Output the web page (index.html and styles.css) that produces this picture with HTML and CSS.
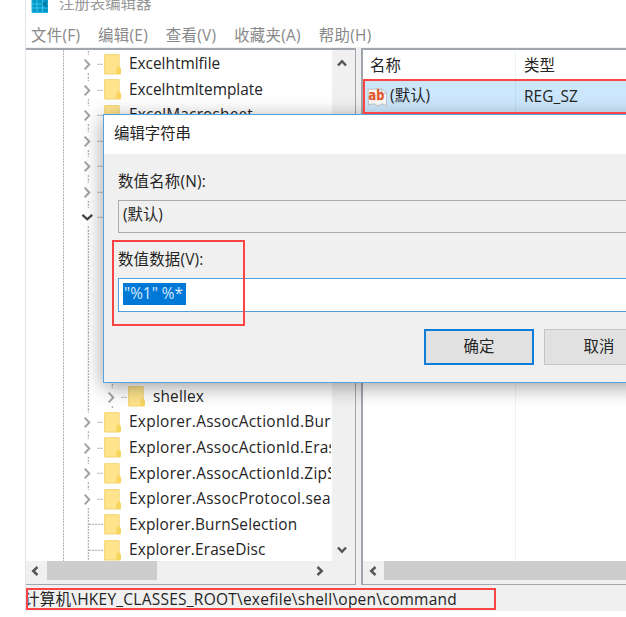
FILE: index.html
```html
<!DOCTYPE html>
<html lang="zh-CN">
<head>
<meta charset="utf-8">
<title>注册表编辑器</title>
<link rel="stylesheet" href="styles.css">
</head>
<body>
<svg class="defs" width="0" height="0">
  <symbol id="closed" viewBox="0 0 28 25.58">
    <path class="dots" d="M12.4 0v4M12.4 22v4M21.5 13.3h5"/>
    <path class="chev" d="M8.7 8.6l4.6 4.9-4.6 4.9"/>
  </symbol>
  <symbol id="open" viewBox="0 0 28 25.58">
    <path class="dots" d="M12.4 0v4M12.4 22v4M21.5 13.3h5"/>
    <path class="chev dark" d="M6.4 10.8l4.9 4.5 4.9-4.5"/>
  </symbol>
  <symbol id="leaf" viewBox="0 0 28 25.58">
    <path class="dots" d="M12.4 0v25.58M13 13.3h14"/>
  </symbol>
  <symbol id="line" viewBox="0 0 28 25.58">
    <path class="dots" d="M12.4 0v25.58"/>
  </symbol>
  <symbol id="folder" viewBox="0 0 17 22">
    <path d="M.7 1.7h14.4v12l1.3 1.5v5.8H.7z" fill="#ffe48d" stroke="#f2d46c" stroke-width="1"/>
    <path d="M12.3 21v-4.6l1.5-3h1.5l1.2 2V21z" fill="#f7d55c"/>
  </symbol>
</svg>
<main class="window">
  <header class="title">
    <svg class="app" width="19" height="15" viewBox="0 0 19 15"><path d="M1 0h16v12.5H1z" fill="#0797c9"/><path d="M1 4h16M1 8h16M6 0v12M11.5 0v12" stroke="#35c4ed"/><path d="M8 0l3 4 5-3v7l-4-3z" fill="#087aa8"/><path d="M1 0v12.5h16" fill="none" stroke="#21b7e5"/></svg>
    <span>注册表编辑器</span>
  </header>
  <nav class="menu"><span>文件(F)</span><span>编辑(E)</span><span>查看(V)</span><span>收藏夹(A)</span><span>帮助(H)</span></nav>
  <div class="panes">
    <section class="pane left">
      <div class="upper">
        <div class="tree">
          <div class="row"><svg class="ex"><use href="#closed"/></svg><svg class="fo"><use href="#folder"/></svg><span>Excelhtmlfile</span></div>
          <div class="row"><svg class="ex"><use href="#closed"/></svg><svg class="fo"><use href="#folder"/></svg><span>Excelhtmltemplate</span></div>
          <div class="row"><svg class="ex"><use href="#closed"/></svg><svg class="fo"><use href="#folder"/></svg><span>ExcelMacrosheet</span></div>
          <div class="row"><svg class="ex"><use href="#closed"/></svg></div>
          <div class="row"><svg class="ex"><use href="#closed"/></svg></div>
          <div class="row"><svg class="ex"><use href="#closed"/></svg></div>
          <div class="row"><svg class="ex"><use href="#open"/></svg></div>
          <div class="row"><svg class="ex"><use href="#line"/></svg></div>
          <div class="row"><svg class="ex"><use href="#line"/></svg></div>
          <div class="row"><svg class="ex"><use href="#line"/></svg></div>
          <div class="row"><svg class="ex"><use href="#line"/></svg></div>
          <div class="row"><svg class="ex"><use href="#line"/></svg></div>
          <div class="row"><svg class="ex"><use href="#line"/></svg></div>
          <div class="row child"><svg class="ex"><use href="#line"/></svg><svg class="ex"><use href="#closed"/></svg><svg class="fo"><use href="#folder"/></svg><span>shellex</span></div>
          <div class="row"><svg class="ex"><use href="#closed"/></svg><svg class="fo"><use href="#folder"/></svg><span>Explorer.AssocActionId.Bur</span></div>
          <div class="row"><svg class="ex"><use href="#closed"/></svg><svg class="fo"><use href="#folder"/></svg><span>Explorer.AssocActionId.Eras</span></div>
          <div class="row"><svg class="ex"><use href="#closed"/></svg><svg class="fo"><use href="#folder"/></svg><span>Explorer.AssocActionId.ZipS</span></div>
          <div class="row"><svg class="ex"><use href="#closed"/></svg><svg class="fo"><use href="#folder"/></svg><span>Explorer.AssocProtocol.sea</span></div>
          <div class="row"><svg class="ex"><use href="#leaf"/></svg><svg class="fo"><use href="#folder"/></svg><span>Explorer.BurnSelection</span></div>
          <div class="row"><svg class="ex"><use href="#leaf"/></svg><svg class="fo"><use href="#folder"/></svg><span>Explorer.EraseDisc</span></div>
        </div>
        <div class="vbar">
          <svg width="12" height="10" viewBox="0 0 12 10"><path class="arrow" d="M2 7.5l4-4.3 4 4.3"/></svg>
          <svg width="12" height="10" viewBox="0 0 12 10"><path class="arrow" d="M2 2.5l4 4.3 4-4.3"/></svg>
        </div>
      </div>
      <div class="hbar">
        <svg width="10" height="12" viewBox="0 0 10 12"><path class="arrow" d="M7.5 2L3.2 6l4.3 4"/></svg>
        <div class="thumb"></div>
        <svg class="end" width="10" height="12" viewBox="0 0 10 12"><path class="arrow" d="M2.5 2l4.3 4-4.3 4"/></svg>
      </div>
    </section>
    <section class="pane right">
      <div class="list">
        <div class="cols head"><span>名称</span><span>类型</span></div>
        <div class="cols value">
          <span><svg width="21" height="21" viewBox="0 0 20 20"><path d="M1 2h13l4.5 3v13l-4-2-4 2-4-2-5 1z" fill="#fafafa" stroke="#c4c7ca"/><path d="M14 2v4h4.5" fill="none" stroke="#b4b7ba"/><text x="1.5" y="12.3" textLength="15" lengthAdjust="spacingAndGlyphs">ab</text></svg><i>(默认)</i></span>
          <span class="type">REG_SZ</span>
        </div>
        <div class="cols rest"><span></span><span></span></div>
      </div>
      <div class="hbar">
        <svg width="10" height="12" viewBox="0 0 10 12"><path class="arrow" d="M7.5 2L3.2 6l4.3 4"/></svg>
        <div class="thumb"></div>
      </div>
    </section>
  </div>
  <footer class="status"><span><b>计算机</b>\HKEY_CLASSES_ROOT\exefile\shell\open\command</span></footer>
</main>
<section class="dialog">
  <h1>编辑字符串</h1>
  <div class="form">
    <label>数值名称(N):</label>
    <div class="field readonly"><span>(默认)</span></div>
    <label>数值数据(V):</label>
    <div class="field"><mark>"%1" %*</mark></div>
    <div class="buttons"><button class="ok">确定</button><button>取消</button></div>
  </div>
</section>
<div class="note note-value"></div>
<div class="note note-data"></div>
<div class="note note-path"></div>
</body>
</html>
```

FILE: styles.css
```css
* { box-sizing: border-box; }
body {
  margin: 0; width: 626px; height: 617px; overflow: hidden; background: #fff; position: relative;
  font: 15.4px/20px "Open Sans", "Noto Sans CJK SC", sans-serif; color: #242424; white-space: nowrap;
}
svg { display: block; flex: none; }
.defs { position: absolute; }
.dots { fill: none; stroke: #b4b4b4; stroke-width: 1.3; stroke-dasharray: 2 1; }
.chev { fill: none; stroke: #a2a2a2; stroke-width: 2; }
.chev.dark { stroke: #444; stroke-width: 2.3; }
.arrow { fill: none; stroke: #555; stroke-width: 2.4; }

.window { margin-left: 25px; height: 611px; border-left: 1px solid #e4e4e4; display: flex; flex-direction: column; }
.title { height: 22px; display: flex; padding-left: 5px; color: #999; flex: none; }
.title span { margin: -6px 0 0 9px; }
.menu { height: 26px; flex: none; display: flex; padding: 4px 0 0 5px; gap: 17.8px; color: #888; font-size: 15.4px; letter-spacing: .3px; border-bottom: 1px solid #f2f2f2; }
.panes { height: 537px; flex: none; display: flex; gap: 5px; background: #f0f0f0; }
.pane { border: solid #a1a5ad; border-width: 2px 1px 1px; display: flex; flex-direction: column; height: 537px; background: #fff; }
.left { width: 330px; border-left: 0; }
.right { flex: 1; border-left-width: 2px; border-right: 0; }
.upper { height: 511px; display: flex; overflow: hidden; }
.tree { width: 305px; overflow: hidden; padding: 1px 0 0 50px; background: repeating-linear-gradient(#b9b9b9 0 2px, #eee 2px 3px) 37px 0 / 1px 100% no-repeat; }
.row { height: 25.58px; display: flex; align-items: center; letter-spacing: .17px; }
.row:nth-child(n+15):nth-child(-n+18) { letter-spacing: .3px; }
.row:first-child { letter-spacing: 0; }
.row:nth-child(2) { letter-spacing: 0; }
.ex { width: 28px; height: 25.58px; }
.fo { width: 17px; height: 22px; }
.row span { margin: 1px 0 0 8px; }
.child .ex:first-child { margin-right: -4px; }
.vbar { flex: 1; background: #f0f0f0; display: flex; flex-direction: column; justify-content: space-between; padding: 8px 0 6px 4px; margin-left: 1px; }
.hbar { flex: 1; background: #f0f0f0; display: flex; align-items: center; padding: 0 0 4px 4px; }
.thumb { background: #cdcdcd; height: 19px; width: 110px; margin-left: 7px; }
.hbar .end { margin-left: 158px; }
.right .hbar { padding-left: 5px; }
.right .thumb { flex: 1; margin-left: 6px; }
.list { height: 511px; display: flex; flex-direction: column; }
.cols { display: grid; grid-template-columns: 153px 1fr; }
.cols > span { display: flex; align-items: center; padding-left: 8px; }
.cols > span:first-child { border-right: 1px solid #edf2f8; }
.head { height: 31px; padding-top: 1px; }
.head > span:first-child { padding-left: 7px; }
.value { height: 32px; background: #cce6fb; }
.value > span:first-child { padding-left: 4px; gap: 2px; border-color: #bddaf0; letter-spacing: .1px; }
.value i { font-style: normal; margin-top: -2px; }
.value .type { letter-spacing: .1px; margin-top: -1px; }
.value text { font: bold 13.5px "DejaVu Sans", sans-serif; fill: #df5a30; stroke: #df5a30; stroke-width: .3; letter-spacing: 0; }
.rest { flex: 1; }
.status { flex: 1; background: #f0f0f0; display: flex; align-items: center; overflow: hidden; padding-top: 2px; }
.status b { font-weight: 400; }
.status span { margin-left: -2px; font-size: 15.5px; letter-spacing: .24px; }

.dialog { position: absolute; left: 103px; top: 114px; width: 540px; height: 269px; border: 1px solid #55a2df; background: #f0f0f0; box-shadow: 0 4px 19px rgba(0,0,0,.38); }
.dialog h1 { margin: 0; height: 39px; background: #fff; font: inherit; padding: 9px 0 0 10px; }
.form { padding: 18px 0 0 14px; display: flex; flex-direction: column; }
.form label { height: 20px; letter-spacing: .22px; }
.field { height: 33px; margin: 8px 0 18px; border: 1px solid #4f9fdf; background: #fff; display: flex; align-items: center; padding-left: 4px; }
.field.readonly { background: #f0f0f0; border-color: #aaa; margin-bottom: 17px; }
.readonly span { margin-top: -3px; }
.field mark { background: #0078d7; color: #d5eaff; height: 22px; width: 63px; margin-top: -3px; padding-left: 1px; line-height: 21px; }
.field:not(.readonly) { height: 34px; }
.buttons { display: flex; gap: 10px; padding-left: 306px; margin-top: -1px; }
.buttons button { width: 110px; height: 36px; font: inherit; color: inherit; background: #e1e1e1; border: 1px solid #c4c4c4; padding: 0; flex: none; }
.buttons .ok { border: 2px solid #0f7dda; }

.note { position: absolute; border: 2px solid #fb4545; }
.note-value { left: 363px; top: 79px; width: 280px; height: 35px; }
.note-data { left: 112px; top: 240px; width: 133px; height: 86px; }
.note-path { left: 26px; top: 588px; width: 470px; height: 22px; }
```
